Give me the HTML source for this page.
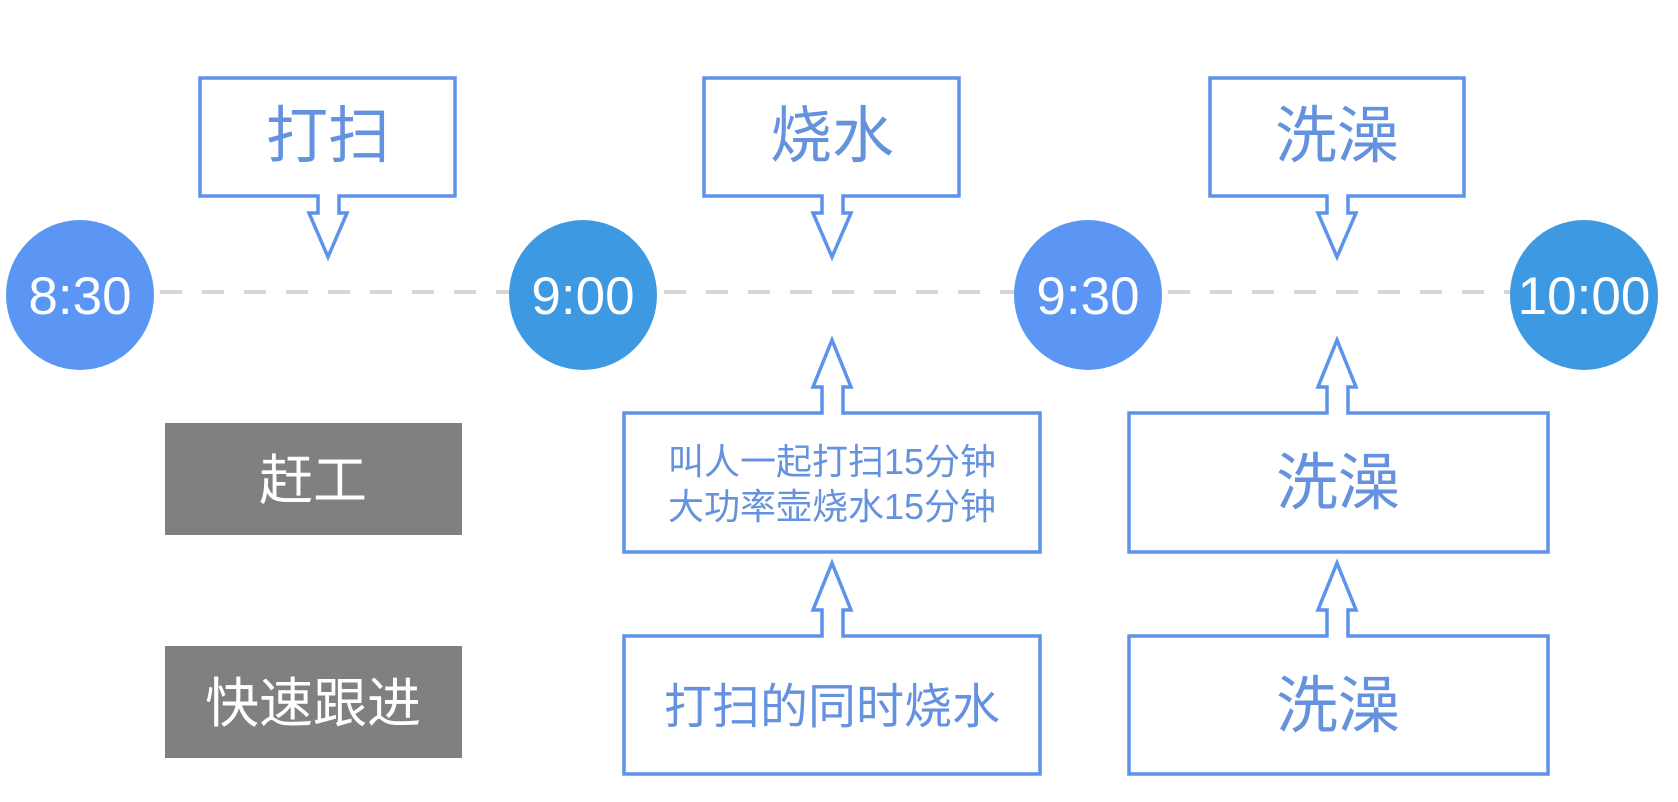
<!DOCTYPE html>
<html><head><meta charset="utf-8"><style>
html,body{margin:0;padding:0;background:#fff;}
svg{display:block}
text{font-family:"Liberation Sans","Noto Sans CJK SC",sans-serif;}
</style></head><body>
<svg width="1678" height="802" viewBox="0 0 1678 802" xmlns="http://www.w3.org/2000/svg">
<rect width="1678" height="802" fill="#fff"/>
<line x1="160" y1="292" x2="1510" y2="292" stroke="#d6d6d6" stroke-width="4" stroke-dasharray="22 20"/>
<g fill="#fff" stroke="#5d93ea" stroke-width="3.5" stroke-linejoin="miter">
<path d="M200,78 H455 V196 H339 V213 H347 L328,257 L309,213 H318 V196 H200 Z"/>
<path d="M704,78 H959 V196 H843 V213 H851 L832,257 L813,213 H822 V196 H704 Z"/>
<path d="M1210,78 H1464 V196 H1348 V213 H1356 L1337,257 L1318,213 H1327 V196 H1210 Z"/>
<path d="M624,413 H822 V387 H813 L832,340 L851,387 H843 V413 H1040 V552 H624 Z"/>
<path d="M624,636 H822 V610 H813 L832,563 L851,610 H843 V636 H1040 V774 H624 Z"/>
<path d="M1129,413 H1327 V387 H1318 L1337,340 L1356,387 H1348 V413 H1548 V552 H1129 Z"/>
<path d="M1129,636 H1327 V610 H1318 L1337,563 L1356,610 H1348 V636 H1548 V774 H1129 Z"/>
</g>
<ellipse cx="80" cy="295" rx="74" ry="75" fill="#5b96f5"/>
<ellipse cx="583" cy="295" rx="74" ry="75" fill="#3d9ae2"/>
<ellipse cx="1088" cy="295" rx="74" ry="75" fill="#5b96f5"/>
<ellipse cx="1584" cy="295" rx="74" ry="75" fill="#3d9ae2"/>
<g fill="#fff" font-size="53" text-anchor="middle">
<text x="80" y="314">8:30</text>
<text x="583" y="314">9:00</text>
<text x="1088" y="314">9:30</text>
<text x="1584" y="314">10:00</text>
</g>
<rect x="165" y="423" width="297" height="112" fill="#808080"/>
<rect x="165" y="646" width="297" height="112" fill="#808080"/>
<g fill="#fff" font-size="54" text-anchor="middle">
<text x="313" y="499">赶工</text>
<text x="313" y="722">快速跟进</text>
</g>
<g fill="#6592de" text-anchor="middle">
<text x="328" y="157" font-size="62">打扫</text>
<text x="832" y="157" font-size="62">烧水</text>
<text x="1337" y="157" font-size="62">洗澡</text>
<text x="832" y="474" font-size="36">叫人一起打扫15分钟</text>
<text x="832" y="519" font-size="36">大功率壶烧水15分钟</text>
<text x="832" y="723" font-size="48">打扫的同时烧水</text>
<text x="1338" y="504" font-size="62">洗澡</text>
<text x="1338" y="727" font-size="62">洗澡</text>
</g>
</svg>
</body></html>
